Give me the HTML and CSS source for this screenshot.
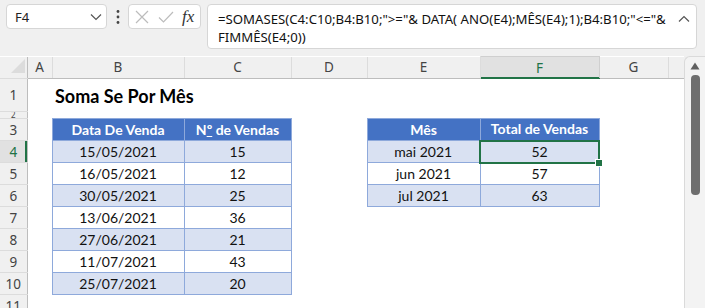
FILE: index.html
```html
<!DOCTYPE html>
<html lang="pt">
<head>
  <meta charset="UTF-8">
  <title>Soma Se Por Mês</title>
  <link rel="stylesheet" href="styles.css">
</head>
<body>

<div class="toolbar">
  <div class="namebox">
    <span>F4</span>
    <svg class="chev" width="12" height="8" viewBox="0 0 12 8"><polyline points="1,1.5 6,6.5 11,1.5" fill="none" stroke="#555" stroke-width="1.2"/></svg>
  </div>
  <div class="dots">
    <svg width="4" height="16" viewBox="0 0 4 16"><circle cx="2" cy="2.5" r="1.4" fill="#444"/><circle cx="2" cy="8" r="1.4" fill="#444"/><circle cx="2" cy="13.5" r="1.4" fill="#444"/></svg>
  </div>
  <div class="fxbox">
    <svg width="14" height="14" viewBox="0 0 14 14"><path d="M1 1 L13 13 M13 1 L1 13" stroke="#bcbcbc" stroke-width="1.2" fill="none"/></svg>
    <svg width="16" height="14" viewBox="0 0 16 14"><polyline points="1,7.5 5.5,12 15,2" fill="none" stroke="#bcbcbc" stroke-width="1.2"/></svg>
    <span class="fx">fx</span>
  </div>
  <div class="formula">
    <div class="ftext">=SOMASES(C4:C10;B4:B10;"&gt;="&amp; DATA( ANO(E4);MÊS(E4);1);B4:B10;"&lt;="&amp;<br>FIMMÊS(E4;0))</div>
    <svg class="caret" width="12" height="8" viewBox="0 0 12 8"><polyline points="1,6.5 6,1.5 11,6.5" fill="none" stroke="#555" stroke-width="1.2"/></svg>
  </div>
</div>

<div class="sheet">
  <table class="grid">
    <colgroup>
      <col style="width:27px"><col style="width:25px"><col style="width:132px"><col style="width:107px">
      <col style="width:76px"><col style="width:113px"><col style="width:119px"><col style="width:69px"><col style="width:16px">
    </colgroup>
    <tr class="colhead">
      <th class="corner"><svg width="14" height="14" viewBox="0 0 14 14"><polygon points="14,0 14,14 0,14" fill="#dcdcdc"/></svg></th>
      <th>A</th><th>B</th><th>C</th><th>D</th><th>E</th><th class="active">F</th><th>G</th><th class="blank"></th>
    </tr>
    <tr class="r1">
      <th>1</th><td></td><td colspan="2" class="title">Soma Se Por Mês</td><td></td><td></td><td></td><td></td><td></td>
    </tr>
    <tr class="r2">
      <th>2</th><td></td><td></td><td></td><td></td><td></td><td></td><td></td><td></td>
    </tr>
    <tr>
      <th>3</th><td></td><td class="hd">Data De Venda</td><td class="hd">N<span class="ord">º</span> de Vendas</td><td></td><td class="hd">Mês</td><td class="hd">Total de Vendas</td><td></td><td></td>
    </tr>
    <tr>
      <th class="active">4</th><td></td><td class="c alt">15/05/2021</td><td class="c alt">15</td><td></td><td class="c alt">mai 2021</td><td class="c alt sel">52<span class="handle"></span></td><td></td><td></td>
    </tr>
    <tr>
      <th>5</th><td></td><td class="c">16/05/2021</td><td class="c">12</td><td></td><td class="c">jun 2021</td><td class="c">57</td><td></td><td></td>
    </tr>
    <tr>
      <th>6</th><td></td><td class="c alt">30/05/2021</td><td class="c alt">25</td><td></td><td class="c alt">jul 2021</td><td class="c alt">63</td><td></td><td></td>
    </tr>
    <tr>
      <th>7</th><td></td><td class="c">13/06/2021</td><td class="c">36</td><td></td><td></td><td></td><td></td><td></td>
    </tr>
    <tr>
      <th>8</th><td></td><td class="c alt">27/06/2021</td><td class="c alt">21</td><td></td><td></td><td></td><td></td><td></td>
    </tr>
    <tr>
      <th>9</th><td></td><td class="c">11/07/2021</td><td class="c">43</td><td></td><td></td><td></td><td></td><td></td>
    </tr>
    <tr>
      <th>10</th><td></td><td class="c alt">25/07/2021</td><td class="c alt">20</td><td></td><td></td><td></td><td></td><td></td>
    </tr>
    <tr>
      <th>11</th><td></td><td></td><td></td><td></td><td></td><td></td><td></td><td></td>
    </tr>
  </table>
  <div class="vscroll">
    <svg class="up" width="10" height="8" viewBox="0 0 10 8"><polygon points="5,0.5 9.5,7.5 0.5,7.5" fill="#606060"/></svg>
    <div class="thumb"></div>
  </div>
</div>

</body>
</html>
```

FILE: styles.css
```css
body {
  margin: 0;
  width: 705px;
  height: 308px;
  overflow: hidden;
  background: #f0f0f0;
  font-family: Lato, "Liberation Sans", sans-serif;
}

/* formula bar */
.toolbar {
  display: flex;
  align-items: flex-start;
  height: 56px;
  padding: 4px 0 0 6px;
  box-sizing: border-box;
  font-family: "Noto Sans", "Liberation Sans", sans-serif;
}
.namebox, .fxbox, .formula {
  background: white;
  border: 1px solid #d6d6d6;
  border-radius: 4px;
  box-sizing: border-box;
}
.namebox {
  width: 101px;
  height: 25px;
  display: flex;
  align-items: center;
  justify-content: space-between;
  padding: 0 4px 0 8px;
  font-size: 13px;
  color: #222;
}
.dots {
  width: 21px;
  height: 25px;
  display: flex;
  align-items: center;
  justify-content: center;
}
.fxbox {
  width: 73px;
  height: 25px;
  display: flex;
  align-items: center;
  gap: 9px;
  padding-left: 6px;
}
.fx {
  font-family: "Liberation Serif", serif;
  font-style: italic;
  font-size: 17px;
  color: #333;
  margin-left: -1px;
}
.formula {
  margin-left: 6px;
  width: 490px;
  height: 45px;
  display: flex;
  justify-content: space-between;
  padding: 5px 6px 0 10px;
}
.ftext {
  font-size: 13.2px;
  line-height: 18px;
  color: #111;
  white-space: nowrap;
}
.caret {
  margin-top: 5px;
}

/* sheet */
.sheet {
  display: flex;
}
.grid {
  border-collapse: collapse;
  table-layout: fixed;
  width: 684px;
  background: white;
  font-size: 14px;
  color: #111;
}
.grid tr {
  height: 22px;
}
.grid td, .grid th {
  padding: 0;
  line-height: 16px;
  overflow: hidden;
  white-space: nowrap;
}
.grid th {
  background: #f0f0f0;
  font-family: "Noto Sans", "Liberation Sans", sans-serif;
  font-weight: normal;
  font-size: 13.5px;
  color: #444;
}
.colhead th {
  border-right: 1px solid #dcdcdc;
  border-bottom: 1px solid #bdbdbd;
}
.colhead th.corner {
  text-align: right;
  vertical-align: bottom;
  padding: 0 2px 2px 0;
}
.colhead th.blank {
  border-right: none;
}
.colhead th.active {
  background: #e1e1e1;
  color: #217346;
  border-top: 1px solid #cfcfcf;
  border-left: 1px solid #cfcfcf;
  border-right: 1px solid #cfcfcf;
  border-bottom: 1px solid #217346;
  box-shadow: inset 0 -1px #217346;
}
tr th:first-child {
  border-right: 1px solid #bdbdbd;
  border-bottom: 1px solid #dcdcdc;
}
tr th.active:first-child {
  background: #e1e1e1;
  color: #217346;
  box-shadow: inset -2px 0 #217346;
}
.grid tr.r1 {
  height: 33px;
}
.grid tr.r2 {
  height: 7px;
}
.r2 th {
  font-size: 8px;
  line-height: 6px;
}
.title {
  font-weight: bold;
  font-size: 18px;
  padding-left: 3px !important;
  padding-top: 2px !important;
  color: #000;
}

/* data tables */
.hd {
  background: #4472c4;
  color: white;
  font-weight: bold;
  text-align: center;
  border: 1px solid #8ea9db;
}
.ord {
  text-decoration: underline;
}
.c {
  text-align: center;
  border: 1px solid #8ea9db;
}
.alt {
  background: #d9e1f2;
}
.grid td.sel {
  position: relative;
  overflow: visible;
  border: 2px solid #217346;
}
.handle {
  position: absolute;
  right: -5px;
  bottom: -5px;
  width: 6px;
  height: 6px;
  background: #217346;
  border: 1px solid white;
}

/* scrollbar */
.vscroll {
  width: 21px;
  height: 252px;
  background: #f3f3f3;
  border-left: 1px solid #dadada;
  border-top: 1px solid #dadada;
  border-radius: 6px 0 0 0;
  box-sizing: border-box;
  display: flex;
  flex-direction: column;
  align-items: center;
  padding-top: 5px;
}
.thumb {
  margin-top: 5px;
  width: 9px;
  height: 120px;
  background: #6e6e6e;
  border-radius: 4px;
}
```
